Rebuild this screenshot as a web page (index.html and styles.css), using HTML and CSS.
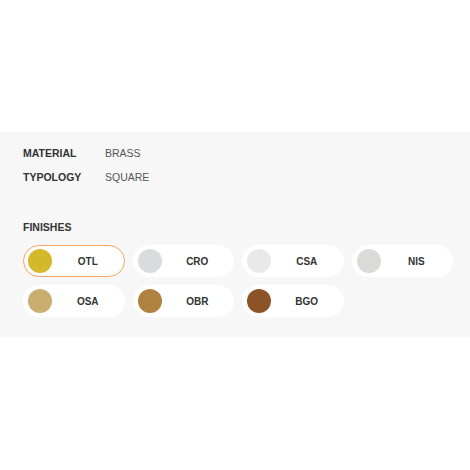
FILE: index.html
```html
<!DOCTYPE html>
<html>
<head>
<meta charset="utf-8">
<link rel="stylesheet" href="styles.css">
</head>
<body>
<div class="spacer"></div>
<section class="panel">
  <div class="specs">
    <div class="spec"><span class="key">MATERIAL</span><span class="val">BRASS</span></div>
    <div class="spec"><span class="key">TYPOLOGY</span><span class="val">SQUARE</span></div>
  </div>
  <h3 class="title">FINISHES</h3>
  <div class="finishes">
    <div class="pill active"><span class="dot otl"></span><span class="label">OTL</span></div>
    <div class="pill"><span class="dot cro"></span><span class="label">CRO</span></div>
    <div class="pill"><span class="dot csa"></span><span class="label">CSA</span></div>
    <div class="pill"><span class="dot nis"></span><span class="label">NIS</span></div>
    <div class="pill"><span class="dot osa"></span><span class="label">OSA</span></div>
    <div class="pill"><span class="dot obr"></span><span class="label">OBR</span></div>
    <div class="pill"><span class="dot bgo"></span><span class="label">BGO</span></div>
  </div>
</section>
</body>
</html>
```
FILE: styles.css
```css
* { box-sizing: border-box; }
body {
  margin: 0;
  background: #ffffff;
  font-family: "Liberation Sans", Arial, sans-serif;
  color: #333333;
}
.spacer { height: 132px; }
.panel {
  background: #f7f7f7;
  padding: 9px 17px 20px 23px;
}
.specs { display: flex; flex-direction: column; }
.spec {
  display: flex;
  line-height: 24px;
  font-size: 10.5px;
}
.key {
  width: 82px;
  font-weight: bold;
  color: #333333;
}
.val { color: #555555; }
.title {
  margin: 26px 0 6px 0;
  font-size: 10.5px;
  line-height: 24px;
  font-weight: bold;
  color: #333333;
}
.finishes {
  display: grid;
  grid-template-columns: repeat(4, 1fr);
  gap: 8px;
}
.pill {
  height: 32px;
  background: #ffffff;
  border-radius: 16px;
  display: flex;
  align-items: center;
  padding-left: 4px;
  border: 1.5px solid transparent;
}
.pill.active { border-color: #f7a661; }
.dot {
  width: 24px;
  height: 24px;
  border-radius: 50%;
  flex: none;
}
.label {
  flex: 1;
  text-align: center;
  font-size: 10px;
  font-weight: bold;
  color: #333333;
}
.otl { background: #d3b829; }
.cro { background: #d8dcdc; }
.csa { background: #e9e9e9; }
.nis { background: #dbdad6; }
.osa { background: #c9ae70; }
.obr { background: #af823f; }
.bgo { background: #8c5426; }
```
